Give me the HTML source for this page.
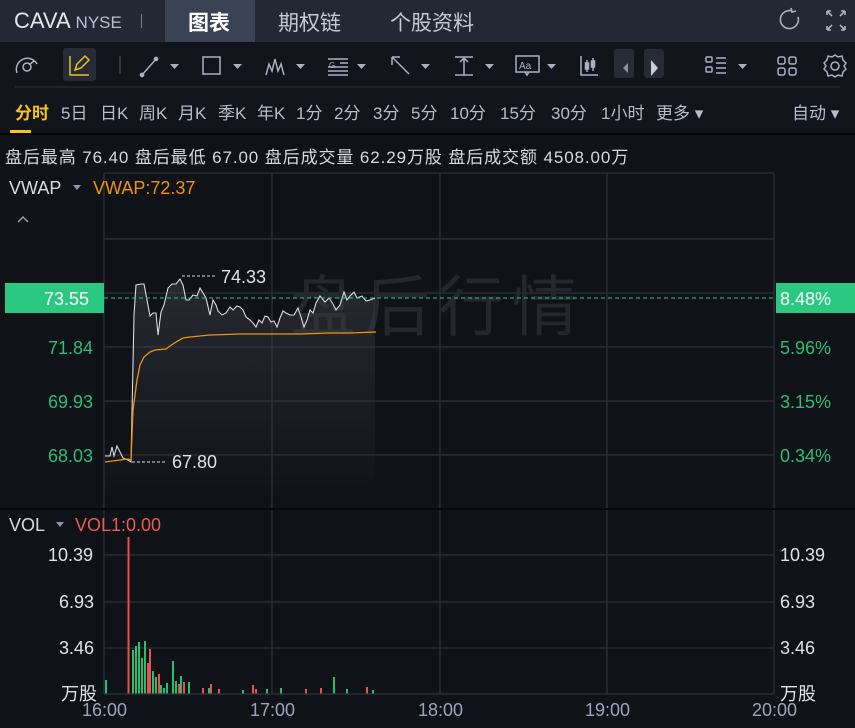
<!DOCTYPE html>
<html><head><meta charset="utf-8"><style>
*{margin:0;padding:0;box-sizing:border-box}
body{width:855px;height:728px;background:#0f1217;font-family:"Liberation Sans","Noto Sans CJK SC",sans-serif;position:relative;overflow:hidden;color:#c8ccd6}
.a{position:absolute;white-space:nowrap}
#hdr{position:absolute;left:0;top:0;width:855px;height:42px;background:#232834}
#tb{position:absolute;left:0;top:42px;width:855px;height:46px;background:#11141a}
#tabs{position:absolute;left:0;top:88px;width:855px;height:45px;background:#11141a}
.tf{position:absolute;top:99px;font-size:17px;color:#b4bccf}
</style></head><body>
<div id="hdr"></div>
<div class="a" style="left:165px;top:0;width:90px;height:42px;background:#3a4354"></div>
<div class="a" style="left:14px;top:8px;font-size:22px;color:#e6e8ee">CAVA <span style="font-size:17px;color:#b8bfcf">NYSE</span></div>
<div class="a" style="left:141px;top:14px;width:1px;height:14px;background:#7a8192"></div>
<div class="a" style="left:188px;top:7px;font-size:21px;color:#fff;font-weight:bold">图表</div>
<div class="a" style="left:278px;top:7px;font-size:21px;color:#c3c9d6">期权链</div>
<div class="a" style="left:390px;top:7px;font-size:21px;color:#c3c9d6">个股资料</div>
<svg class="a" style="left:0;top:0" width="855" height="42" fill="none" stroke="#aab1c3" stroke-width="1.6">
<path d="M792 11 A9 9 0 1 0 798 17"/><path d="M791 8 L792 12 L796 11"/>
<path d="M827 11l5 5M827 11h4M827 11v4M845 11l-5 5M845 11h-4M845 11v4M827 30l5-5M827 30h4M827 30v-4M845 30l-5-5M845 30h-4M845 30v-4"/>
</svg>
<div id="tb"></div>
<div class="a" style="left:63px;top:48px;width:33px;height:33px;background:#262b35;border-radius:3px"></div>
<div class="a" style="left:614px;top:49px;width:20px;height:29px;background:#262b35;border-radius:3px"></div>
<div class="a" style="left:644px;top:49px;width:20px;height:29px;background:#262b35;border-radius:3px"></div>
<svg class="a" style="left:0;top:42px" width="855" height="46" fill="none" stroke="#a9b0c4" stroke-width="1.5">
<path d="M17 31 A11 11 0 0 1 37 22" /><circle cx="27" cy="25" r="4"/><path d="M29 23l5-4"/>
<g stroke="#e6c229"><path d="M70 14v19h19"/><path d="M75 28l2-6 8-8 4 4-8 8z"/></g>
<path d="M120 14v18" stroke="#3c4250"/>
<path d="M142 33l14-16"/><circle cx="142" cy="33" r="1.6" fill="#a9b0c4"/><circle cx="156" cy="17" r="1.6" fill="#a9b0c4"/>
<rect x="203" y="15" width="17" height="17"/>
<path d="M266 33l3-11 3 7 3-12 3 12 3-7 3 11"/>
<path d="M328 17h20M340 21h8M328 25h20M328 29h20M328 33h20"/><text x="329" y="26" font-size="8" fill="#a9b0c4" stroke="none">G</text>
<path d="M392 15l17 17M392 15v8M392 15h8"/>
<path d="M455 15h18M455 33h18M464 15v18M460 20l4-4 4 4"/>
<rect x="516" y="14" width="23" height="16"/><path d="M525 30l2 3 2-3"/><text x="519" y="27" font-size="10" fill="#a9b0c4" stroke="none">Aa</text>
<path d="M581 14v19h17M587 18v12M593 16v13"/><rect x="585.5" y="21" width="3" height="6" fill="#a9b0c4"/><rect x="591.5" y="19" width="3" height="6" fill="#a9b0c4"/>
<path d="M628 21l-5 5 5 5z" fill="#8a909f" stroke="none"/><path d="M651 18v16l7-8z" fill="#c8ccd8" stroke="none"/>
<rect x="706" y="15" width="6" height="5" rx="1"/><rect x="706" y="25" width="6" height="5" rx="1"/><path d="M716 16h10M716 21h10M716 26h10M716 31h10"/>
<rect x="778" y="15" width="7" height="7" rx="2"/><rect x="789" y="15" width="7" height="7" rx="2"/><rect x="778" y="26" width="7" height="7" rx="2"/><rect x="789" y="26" width="7" height="7" rx="2"/>
<circle cx="835" cy="24" r="4"/><path d="M835 13l3 2 4-1 1 4 3 3-2 3 2 3-3 3-1 4-4-1-3 2-3-2-4 1-1-4-3-3 2-3-2-3 3-3 1-4 4 1z"/>
<g fill="#a9b0c4" stroke="none"><path d="M170 22h9l-4.5 5z"/><path d="M233 22h9l-4.5 5z"/><path d="M296 22h9l-4.5 5z"/><path d="M357 22h9l-4.5 5z"/><path d="M421 22h9l-4.5 5z"/><path d="M485 22h9l-4.5 5z"/><path d="M547 22h9l-4.5 5z"/><path d="M738 22h9l-4.5 5z"/></g>
<path d="M15 45h825" stroke="#2a2f3a" stroke-width="1"/>
</svg>
<div id="tabs"></div>
<div class="tf" style="left:15px;color:#f5c518;font-weight:bold">分时</div>
<div class="a" style="left:10px;top:130px;width:21px;height:3px;background:#f5c518"></div>
<div class="tf" style="left:61px">5日</div><div class="tf" style="left:100px">日K</div><div class="tf" style="left:139px">周K</div><div class="tf" style="left:178px">月K</div><div class="tf" style="left:218px">季K</div><div class="tf" style="left:257px">年K</div><div class="tf" style="left:296px">1分</div><div class="tf" style="left:334px">2分</div><div class="tf" style="left:373px">3分</div><div class="tf" style="left:411px">5分</div><div class="tf" style="left:450px">10分</div><div class="tf" style="left:500px">15分</div><div class="tf" style="left:551px">30分</div><div class="tf" style="left:601px">1小时</div><div class="tf" style="left:656px">更多 ▾</div><div class="tf" style="left:792px">自动 ▾</div>
<div class="a" style="left:0;top:133px;width:855px;height:2px;background:#050608"></div>
<div class="a" style="left:5px;top:143px;font-size:17px;letter-spacing:0.9px;color:#d6d9e0">盘后最高 76.40 盘后最低 67.00 盘后成交量 62.29万股 盘后成交额 4508.00万</div>
<svg class="a" style="left:0;top:0" width="855" height="728">
<defs><linearGradient id="g" x1="0" y1="0" x2="0" y2="1"><stop offset="0" stop-color="#3a3e46" stop-opacity=".55"/><stop offset="1" stop-color="#3a3e46" stop-opacity="0"/></linearGradient></defs>
<g stroke="#2b313c" stroke-width="1.3">
<path d="M104 173h670M104 239h670M104 293h670M104 347h670M104 401h670M104 455h670M104 555h670M104 602h670M104 648h670M104 694h670"/>
<path d="M104 173v521M272 173v521M440 173v521M607 173v521M774 173v521"/>
</g>
<path d="M0 509h855" stroke="#050608" stroke-width="2"/>
<text x="290" y="330" font-size="66" fill="#24272d" font-family="Noto Sans CJK SC,sans-serif" letter-spacing="8">盘后行情</text>
<path d="M105 456L110 456 112 447 114 456 117 446 120 452 123 458 128 460 131 462 134 315 136 285 141 284 144 284 147 300 150 316 153 313 156 313 158 335 161 312 164 305 168 288 172 284 176 284 180 279 183 285 186 300 189 300 193 295 197 296 200 288 203 293 206 298 210 315 213 300 216 305 218 311 222 315 226 313 230 307 233 310 237 306 240 307 243 310 246 317 250 320 253 323 256 327 259 320 262 323 265 316 268 317 271 322 274 321 277 327 280 318 283 311 286 313 290 315 294 315 298 308 301 317 304 327 307 320 310 310 313 313 316 303 320 296 325 302 329 298 333 304 336 310 340 305 344 292 347 300 350 296 354 292 357 298 362 296 366 301 370 300 375 298L375 500 105 500Z" fill="url(#g)"/>
<path d="M105 456L110 456 112 447 114 456 117 446 120 452 123 458 128 460 131 462 134 315 136 285 141 284 144 284 147 300 150 316 153 313 156 313 158 335 161 312 164 305 168 288 172 284 176 284 180 279 183 285 186 300 189 300 193 295 197 296 200 288 203 293 206 298 210 315 213 300 216 305 218 311 222 315 226 313 230 307 233 310 237 306 240 307 243 310 246 317 250 320 253 323 256 327 259 320 262 323 265 316 268 317 271 322 274 321 277 327 280 318 283 311 286 313 290 315 294 315 298 308 301 317 304 327 307 320 310 310 313 313 316 303 320 296 325 302 329 298 333 304 336 310 340 305 344 292 347 300 350 296 354 292 357 298 362 296 366 301 370 300 375 298" fill="none" stroke="#d8dbe2" stroke-width="1.1"/>
<path d="M105 462L120 460 128 459 131 460 133 410 137 380 140 365 144 357 150 352 155 350 166 349 170 346 176 342 183 338 190 337 210 335 240 334 270 334 300 334 330 333 350 333 376 332" fill="none" stroke="#f0920e" stroke-width="1.3"/>
<path d="M104 298h670" stroke="#2ec87f" stroke-dasharray="4 3" stroke-width="1"/>
<path d="M182 276h34M132 462h34" stroke="#d8dbe2" stroke-dasharray="3 2" stroke-width="1"/>
<g font-size="18" fill="#dfe2e8"><text x="221" y="283">74.33</text><text x="172" y="468">67.80</text></g>
<rect x="5" y="283" width="99" height="30" fill="#2ac880"/><rect x="776" y="283" width="79" height="30" fill="#2ac880"/>
<g font-size="18" fill="#fff"><text x="44" y="305">73.55</text><text x="780" y="305">8.48%</text></g>
<g font-size="18" fill="#2ebc77"><text x="48" y="354">71.84</text><text x="48" y="408">69.93</text><text x="48" y="462">68.03</text><text x="780" y="354">5.96%</text><text x="780" y="408">3.15%</text><text x="780" y="462">0.34%</text></g>
<text x="9" y="194" font-size="18" fill="#d8dbe2">VWAP</text><path d="M73 185h8l-4 5z" fill="#8e94b0"/>
<text x="93" y="194" font-size="18" fill="#f0920e">VWAP:72.37</text>
<path d="M18 222l5-5 5 5" fill="none" stroke="#9aa0b2" stroke-width="1.5"/>
<text x="9" y="531" font-size="18" fill="#d8dbe2">VOL</text><path d="M56 522h8l-4 5z" fill="#8e94b0"/>
<text x="75" y="531" font-size="18" fill="#ee5a52">VOL1:0.00</text>
<g font-size="18" fill="#dfe2e8"><text x="48" y="561">10.39</text><text x="59" y="608">6.93</text><text x="59" y="654">3.46</text><text x="61" y="700">万股</text>
<text x="780" y="561">10.39</text><text x="780" y="608">6.93</text><text x="780" y="654">3.46</text><text x="780" y="700">万股</text></g>
<g font-size="18" fill="#9da4bb"><text x="82" y="716">16:00</text><text x="250" y="716">17:00</text><text x="418" y="716">18:00</text><text x="585" y="716">19:00</text><text x="752" y="716">20:00</text></g>
<g fill="#22c070">
<rect x="105" y="680" width="2" height="14"/><rect x="132" y="650" width="2" height="44"/><rect x="135" y="646" width="2" height="48"/><rect x="138" y="642" width="2" height="52"/><rect x="141" y="658" width="2" height="36"/><rect x="144" y="641" width="2" height="53"/><rect x="152" y="671" width="2" height="23"/><rect x="155" y="677" width="2" height="17"/><rect x="160" y="685" width="2" height="9"/><rect x="163" y="688" width="2" height="6"/><rect x="166" y="683" width="2" height="11"/><rect x="172" y="661" width="2" height="33"/><rect x="175" y="681" width="2" height="13"/><rect x="180" y="676" width="2" height="18"/><rect x="188" y="682" width="2" height="12"/><rect x="208" y="688" width="2" height="6"/><rect x="242" y="690" width="2" height="4"/><rect x="266" y="689" width="2" height="5"/><rect x="280" y="688" width="2" height="6"/><rect x="333" y="677" width="2" height="17"/><rect x="346" y="689" width="2" height="5"/><rect x="372" y="690" width="2" height="4"/>
</g>
<g fill="#ee4f4a">
<rect x="127.5" y="537" width="2" height="157"/><rect x="147" y="663" width="2" height="31"/><rect x="149" y="649" width="2" height="45"/><rect x="158" y="674" width="2" height="20"/><rect x="178" y="684" width="2" height="10"/><rect x="183" y="682" width="2" height="12"/><rect x="202" y="688" width="2" height="6"/><rect x="210" y="684" width="2" height="10"/><rect x="218" y="689" width="2" height="5"/><rect x="252" y="685" width="2" height="9"/><rect x="255" y="689" width="2" height="5"/><rect x="305" y="689" width="2" height="5"/><rect x="320" y="688" width="2" height="6"/><rect x="366" y="687" width="2" height="7"/>
</g>
<path d="M104 694h670" stroke="#2b313c" stroke-width="1.3"/>
</svg>
</body></html>
